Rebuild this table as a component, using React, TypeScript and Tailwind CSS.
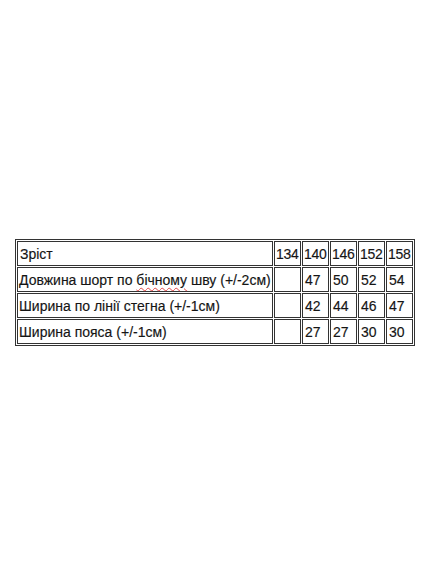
import React from "react";

const sizes = ["134", "140", "146", "152", "158"];
const rows: { label: React.ReactNode; values: string[] }[] = [
  {
    label: (
      <>
        Довжина шорт по{" "}
        <span className="underline decoration-wavy decoration-[#e04848] decoration-1 underline-offset-2">бічному</span> шву
        (+/-2см)
      </>
    ),
    values: ["", "47", "50", "52", "54"],
  },
  { label: "Ширина по лінії стегна (+/-1см)", values: ["", "42", "44", "46", "47"] },
  { label: "Ширина пояса (+/-1см)", values: ["", "27", "27", "30", "30"] },
];

export default function App() {
  const cell = "border border-[#333333] p-0 h-[25px] align-middle leading-none";
  return (
    <div
      className="w-[428px] h-[570px] bg-white pt-[239px] pl-[15px] text-[#151515] text-[14px] [-webkit-text-stroke:0.15px_#151515]"
      style={{ fontFamily: '"Liberation Sans", Arial, sans-serif' }}
    >
      <table className="border border-[#333333] border-separate border-spacing-[1px] w-[400px] table-fixed">
        <colgroup>
          <col className="w-[256px]" />
          <col className="w-[27px]" />
          <col className="w-[27px]" />
          <col className="w-[27px]" />
          <col className="w-[27px]" />
          <col className="w-[27px]" />
        </colgroup>
        <tbody>
          <tr>
            <td className={`${cell} pl-[2px] text-left`}>Зріст</td>
            {sizes.map((s) => (
              <td key={s} className={`${cell} pl-[1px] text-left tracking-[-0.3px]`}>
                {s}
              </td>
            ))}
          </tr>
          {rows.map((r, i) => (
            <tr key={i}>
              <td className={`${cell} pl-[1px] text-left whitespace-nowrap`}>{r.label}</td>
              {r.values.map((v, j) => (
                <td key={j} className={`${cell} pl-[2px] text-left`}>
                  {v}
                </td>
              ))}
            </tr>
          ))}
        </tbody>
      </table>
    </div>
  );
}
